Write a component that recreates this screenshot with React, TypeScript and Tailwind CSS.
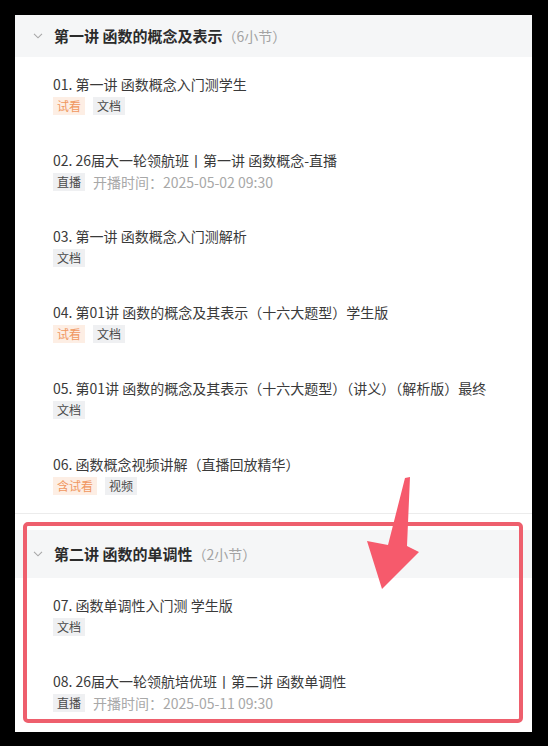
import React from "react";

type Tag = { text: string; kind: "trial" | "plain" };
type Lesson = { title: string; tags: Tag[]; live?: string };

const sectionOne: Lesson[] = [
  { title: "01. 第一讲 函数概念入门测学生", tags: [{ text: "试看", kind: "trial" }, { text: "文档", kind: "plain" }] },
  { title: "02. 26届大一轮领航班丨第一讲 函数概念-直播", tags: [{ text: "直播", kind: "plain" }], live: "开播时间：2025-05-02 09:30" },
  { title: "03. 第一讲 函数概念入门测解析", tags: [{ text: "文档", kind: "plain" }] },
  { title: "04. 第01讲 函数的概念及其表示（十六大题型）学生版", tags: [{ text: "试看", kind: "trial" }, { text: "文档", kind: "plain" }] },
  { title: "05. 第01讲 函数的概念及其表示（十六大题型）（讲义）（解析版）最终", tags: [{ text: "文档", kind: "plain" }] },
  { title: "06. 函数概念视频讲解（直播回放精华）", tags: [{ text: "含试看", kind: "trial" }, { text: "视频", kind: "plain" }] },
];

const sectionTwo: Lesson[] = [
  { title: "07. 函数单调性入门测 学生版", tags: [{ text: "文档", kind: "plain" }] },
  { title: "08. 26届大一轮领航培优班丨第二讲 函数单调性", tags: [{ text: "直播", kind: "plain" }], live: "开播时间：2025-05-11 09:30" },
];

function Chevron() {
  return (
    <svg width="10" height="6" viewBox="0 0 10 6" className="shrink-0">
      <path d="M1 0.8 L5 4.8 L9 0.8" fill="none" stroke="#a8a8a8" strokeWidth="1.1" />
    </svg>
  );
}

function SectionHeader({ title, count, className }: { title: string; count: string; className: string }) {
  return (
    <div className={`flex items-center bg-[#f5f6f7] pl-[18px] ${className}`}>
      <Chevron />
      <span className="ml-[11px] text-[15px] font-bold text-[#2b2b2b] whitespace-nowrap">{title}</span>
      <span className="text-[14px] text-[#a3a3a3] whitespace-nowrap">{count}</span>
    </div>
  );
}

function LessonRow({ lesson }: { lesson: Lesson }) {
  return (
    <div className="pl-[38px] pt-[17px] pb-[18px]">
      <div className="text-[14px] leading-[20px] text-[#3a3a3a] whitespace-nowrap overflow-hidden">{lesson.title}</div>
      <div className="mt-[3px] flex items-center gap-[8px] h-[18px]">
        {lesson.tags.map((t) => (
          <span
            key={t.text}
            className={
              t.kind === "trial"
                ? "px-[4px] text-[12px] leading-[18px] bg-[#fdeee4] text-[#f0975f]"
                : "px-[4px] text-[12px] leading-[18px] bg-[#eff0f2] text-[#4a4a4a]"
            }
          >
            {t.text}
          </span>
        ))}
        {lesson.live && <span className="text-[14px] leading-[18px] text-[#a8a8a8] whitespace-nowrap">{lesson.live}</span>}
      </div>
    </div>
  );
}

export default function App() {
  return (
    <div
      className="relative w-[548px] h-[746px] bg-black overflow-hidden"
      style={{ fontFamily: '"Noto Sans CJK SC", "Noto Sans", sans-serif' }}
    >
      <div className="absolute left-[15px] top-[15px] w-[517px] h-[717px] bg-white overflow-hidden">
        {/* 第一讲 */}
        <SectionHeader title="第一讲 函数的概念及表示" count="（6小节）" className="h-[42px]" />
        <div className="border-b border-[#ececec]">
          {sectionOne.map((l) => (
            <LessonRow key={l.title} lesson={l} />
          ))}
        </div>

        {/* 第二讲 */}
        <SectionHeader title="第二讲 函数的单调性" count="（2小节）" className="mt-[16px] h-[48px]" />
        <div>
          {sectionTwo.map((l) => (
            <LessonRow key={l.title} lesson={l} />
          ))}
        </div>
      </div>

      {/* highlight box */}
      <div className="absolute left-[23px] top-[522px] w-[500px] h-[201px] border-[4px] border-[#ee5f6d] rounded-[5px]" />

      {/* arrow */}
      <svg className="absolute left-0 top-0" width="548" height="746" viewBox="0 0 548 746">
        <polygon
          points="405,478 410,477 407,546 419,552 382,589 367,541 388,545"
          fill="#f65a6c"
        />
      </svg>
    </div>
  );
}
